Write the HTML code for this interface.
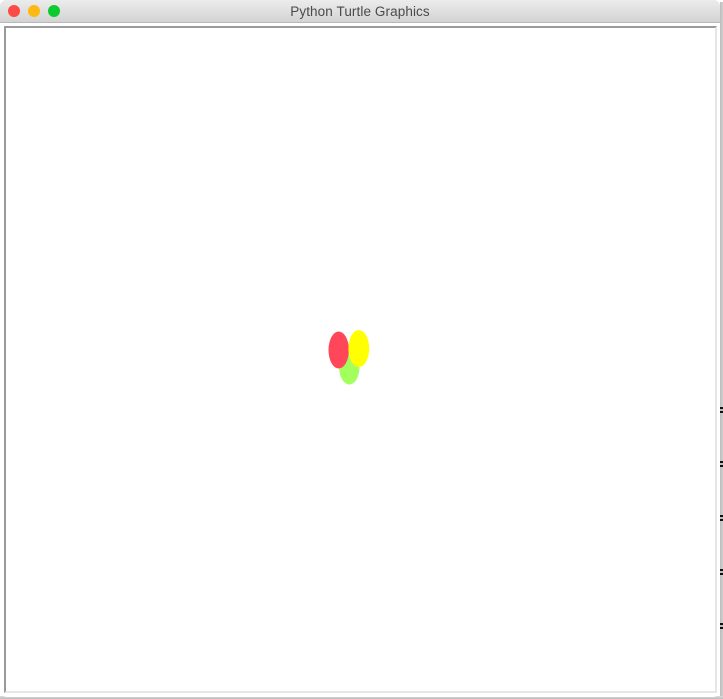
<!DOCTYPE html>
<html>
<head>
<meta charset="utf-8">
<title>Python Turtle Graphics</title>
<style>
html,body{margin:0;padding:0;background:#fff;}
#root{position:relative;width:723px;height:699px;overflow:hidden;background:#fff;}
.abs{position:absolute;}
#side{left:720px;top:2px;width:3px;height:697px;background:linear-gradient(90deg,#bcbcbc,#d0d0d0);}
#bottom{left:0;top:696px;width:723px;height:3px;background:linear-gradient(#dcdcdc,#bcbcbc);}
#win{left:0;top:0;width:720px;height:697px;border-radius:6px 6px 7px 7px;background:#fff;}
#bar{left:0;top:0;width:720px;height:22px;background:linear-gradient(#ececec,#d3d3d3);border-bottom:1px solid #b8b8b8;border-radius:6px 6px 0 0;}
.dot{position:absolute;top:5px;width:12px;height:12px;border-radius:50%;}
#title{left:0;top:4px;width:720px;text-align:center;font:13.5px/15px "Liberation Sans",sans-serif;letter-spacing:0.1px;color:#4a4a4a;}
.tick{position:absolute;left:720px;width:3px;height:6px;border-top:2px solid #111;border-bottom:2px solid #111;background:#bbb;box-sizing:border-box;}
#frame{left:4px;top:26px;width:713px;height:667px;border-left:2px solid #9a9a9a;border-top:2px solid #9a9a9a;border-right:2px solid #e6e6e6;border-bottom:2px solid #e6e6e6;box-sizing:border-box;background:#fff;}
</style>
</head>
<body>
<div id="root">
  <div id="side" class="abs"></div>
  <div id="bottom" class="abs"></div>
  <div id="win" class="abs"></div>
  <div id="bar" class="abs">
    <div class="dot" style="left:8px;background:#fc4a46;"></div>
    <div class="dot" style="left:28px;background:#fdb90f;"></div>
    <div class="dot" style="left:48px;background:#0ccb2f;"></div>
  </div>
  <div id="title" class="abs">Python Turtle Graphics</div>
  <div id="frame" class="abs"></div>
  <div class="tick" style="top:407px"></div>
  <div class="tick" style="top:461px"></div>
  <div class="tick" style="top:515px"></div>
  <div class="tick" style="top:569px"></div>
  <div class="tick" style="top:623px"></div>
  <svg class="abs" style="left:0;top:0" width="723" height="699">
    <ellipse cx="349.3" cy="367" rx="10.2" ry="17.5" fill="#a3ff5c"/>
    <ellipse cx="338.7" cy="350" rx="10.2" ry="18.5" fill="#ff4759"/>
    <ellipse cx="358.8" cy="348.5" rx="10.4" ry="18.5" fill="#ffff00"/>
  </svg>
</div>
</body>
</html>
